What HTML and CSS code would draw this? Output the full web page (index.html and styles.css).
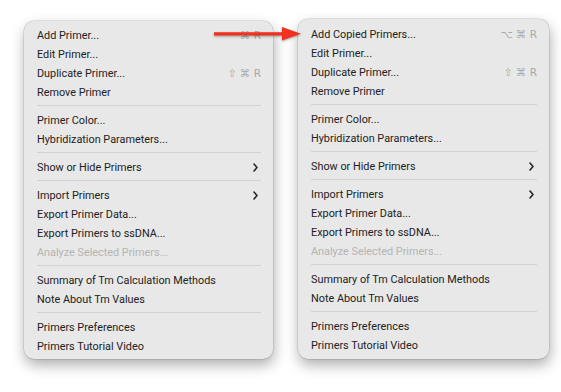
FILE: index.html
```html
<!DOCTYPE html>
<html>
<head>
<meta charset="utf-8">
<link rel="stylesheet" href="styles.css">
</head>
<body>
<div class="stage">
  <div class="menu menu-left">
    <div class="item"><span>Add Primer...</span><span class="key">⌘ R</span></div>
    <div class="item"><span>Edit Primer...</span></div>
    <div class="item"><span>Duplicate Primer...</span><span class="key">⇧ ⌘ R</span></div>
    <div class="item"><span>Remove Primer</span></div>
    <div class="sep"></div>
    <div class="item"><span>Primer Color...</span></div>
    <div class="item"><span>Hybridization Parameters...</span></div>
    <div class="sep"></div>
    <div class="item"><span>Show or Hide Primers</span><svg class="chev" width="5" height="9" viewBox="0 0 5 9"><path d="M1 1 L4 4.5 L1 8" fill="none" stroke="#262626" stroke-width="1.6" stroke-linecap="round" stroke-linejoin="round"/></svg></div>
    <div class="sep"></div>
    <div class="item"><span>Import Primers</span><svg class="chev" width="5" height="9" viewBox="0 0 5 9"><path d="M1 1 L4 4.5 L1 8" fill="none" stroke="#262626" stroke-width="1.6" stroke-linecap="round" stroke-linejoin="round"/></svg></div>
    <div class="item"><span>Export Primer Data...</span></div>
    <div class="item"><span>Export Primers to ssDNA...</span></div>
    <div class="item disabled"><span>Analyze Selected Primers...</span></div>
    <div class="sep"></div>
    <div class="item"><span>Summary of Tm Calculation Methods</span></div>
    <div class="item"><span>Note About Tm Values</span></div>
    <div class="sep"></div>
    <div class="item"><span>Primers Preferences</span></div>
    <div class="item"><span>Primers Tutorial Video</span></div>
  </div>
  <div class="menu menu-right">
    <div class="item"><span>Add Copied Primers...</span><span class="key">⌥ ⌘ R</span></div>
    <div class="item"><span>Edit Primer...</span></div>
    <div class="item"><span>Duplicate Primer...</span><span class="key">⇧ ⌘ R</span></div>
    <div class="item"><span>Remove Primer</span></div>
    <div class="sep"></div>
    <div class="item"><span>Primer Color...</span></div>
    <div class="item"><span>Hybridization Parameters...</span></div>
    <div class="sep"></div>
    <div class="item"><span>Show or Hide Primers</span><svg class="chev" width="5" height="9" viewBox="0 0 5 9"><path d="M1 1 L4 4.5 L1 8" fill="none" stroke="#262626" stroke-width="1.6" stroke-linecap="round" stroke-linejoin="round"/></svg></div>
    <div class="sep"></div>
    <div class="item"><span>Import Primers</span><svg class="chev" width="5" height="9" viewBox="0 0 5 9"><path d="M1 1 L4 4.5 L1 8" fill="none" stroke="#262626" stroke-width="1.6" stroke-linecap="round" stroke-linejoin="round"/></svg></div>
    <div class="item"><span>Export Primer Data...</span></div>
    <div class="item"><span>Export Primers to ssDNA...</span></div>
    <div class="item disabled"><span>Analyze Selected Primers...</span></div>
    <div class="sep"></div>
    <div class="item"><span>Summary of Tm Calculation Methods</span></div>
    <div class="item"><span>Note About Tm Values</span></div>
    <div class="sep"></div>
    <div class="item"><span>Primers Preferences</span></div>
    <div class="item"><span>Primers Tutorial Video</span></div>
  </div>
  <svg class="arrow" width="92" height="18" viewBox="0 0 92 18">
    <path d="M2 7.2 L70 7.2 L70 2 L89 8.8 L70 15.6 L70 10.6 L2 10.6 Z" fill="#f0321e"/>
  </svg>
</div>
</body>
</html>
```
FILE: styles.css
```css
html, body {
  margin: 0;
  padding: 0;
  background: #ffffff;
}
.stage {
  position: relative;
  display: flex;
  align-items: flex-start;
  gap: 25px;
  padding: 19px 0 0 24px;
  width: 561px;
  height: 392px;
  box-sizing: border-box;
  font-family: Roboto, Inter, "Liberation Sans", sans-serif;
  font-size: 10.85px;
  color: #222222;
}
.menu {
  box-sizing: border-box;
  background: #e8e8e8;
  border-radius: 10px;
  box-shadow: 0 0 0 0.5px rgba(0,0,0,0.18), 1px 6px 14px rgba(0,0,0,0.32);
}
.menu-left {
  margin-top: 2px;
  width: 249px;
  padding: 4px 0;
}
.menu-right {
  width: 251px;
  padding: 5px 0;
}
.item {
  display: flex;
  align-items: center;
  justify-content: space-between;
  box-sizing: border-box;
  height: 19px;
  padding: 1px 12px 0 13px;
  white-space: nowrap;
}
.item.disabled {
  color: #b4b4b4;
}
.key {
  color: #a8a8a8;
  font-family: "DejaVu Sans", Inter, sans-serif;
  font-size: 10.5px;
}
.chev {
  margin-right: 3px;
}
.sep {
  height: 1px;
  margin: 4px 12px 4px 13px;
  background: #d2d2d2;
}
.arrow {
  position: absolute;
  left: 212px;
  top: 25px;
  filter: drop-shadow(0 1px 1px rgba(0,0,0,0.35));
}
```
